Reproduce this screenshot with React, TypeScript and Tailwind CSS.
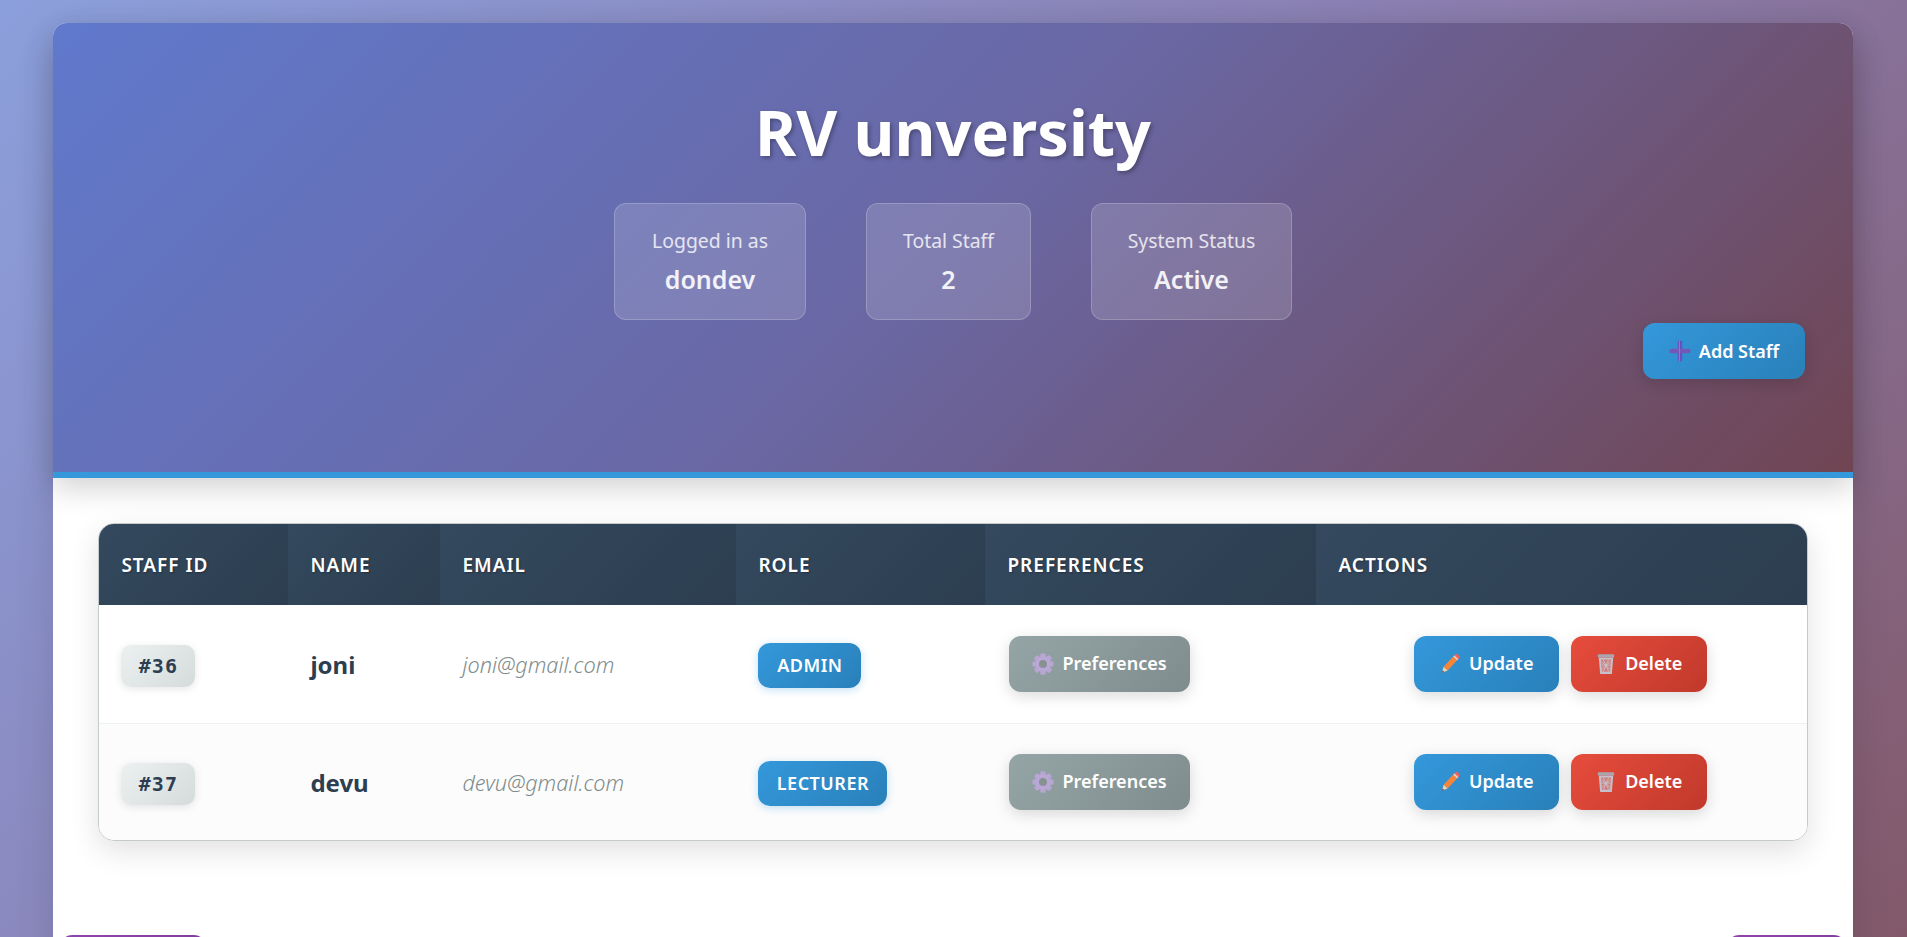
import type { ReactNode } from "react";

const font = { fontFamily: '"Noto Sans", sans-serif' };

function PlusIcon() {
  return (
    <svg viewBox="0 0 20 20" className="w-[22px] h-[22px] shrink-0">
      <rect x="8" y="0.5" width="4" height="19" rx="1.5" fill="#6a4fc0" />
      <rect x="0.5" y="8" width="19" height="4" rx="1.5" fill="#7458b8" />
      <rect x="9" y="0.5" width="1" height="19" fill="#8e78cc" />
    </svg>
  );
}

function GearIcon() {
  const teeth = [0, 45, 90, 135, 180, 225, 270, 315];
  return (
    <svg viewBox="0 0 20 20" className="w-[22px] h-[22px] shrink-0">
      {teeth.map((a) => (
        <rect key={a} x="7.6" y="0.3" width="4.8" height="5" rx="1.4" fill="#b7a6d3" transform={`rotate(${a} 10 10)`} />
      ))}
      <circle cx="10" cy="10" r="7" fill="#b9a8d6" />
      <circle cx="10" cy="10" r="3.6" fill="#87918f" />
      <path d="M6.6 11.2a3.6 3.6 0 0 0 6.6 .6a4.6 4.6 0 0 1-6.6-.6z" fill="#9c8fb8" />
    </svg>
  );
}

function PencilIcon() {
  return (
    <svg viewBox="0 0 20 20" className="w-[22px] h-[22px] shrink-0">
      <path d="M4.2 12.4 13.6 2.6l3.6 3.4-9.4 9.8z" fill="#f5853a" />
      <path d="M13.6 2.6l1.6-1.7a1 1 0 0 1 1.3 0l2.2 2.1a1 1 0 0 1 0 1.4L17.2 6z" fill="#f0625a" />
      <path d="M13 3.2l1-1 3.6 3.4-1 1z" fill="#e6d8dc" />
      <path d="M4.2 12.4 7.8 15.8 2.8 18z" fill="#f5cfa6" />
      <path d="M3.3 15.8 4.8 17.2 2.8 18z" fill="#4a3f6b" />
    </svg>
  );
}

function TrashIcon() {
  return (
    <svg viewBox="0 0 20 20" className="w-[22px] h-[22px] shrink-0">
      <path d="M3.4 4h13.2l-1.3 15H4.7z" fill="#c5c0cc" />
      <rect x="2.6" y="1.2" width="14.8" height="3" rx="0.8" fill="#a9a6b2" />
      <path d="M5.4 6h9.2l-.9 11H6.3z" fill="#cf7f7e" />
      <path d="M6 8l8 7M14 8l-8 7M7.5 6l5 11M12.5 6l-5 11M5.8 11h8.4" stroke="#c9c3cc" strokeWidth="0.8" fill="none" />
    </svg>
  );
}

function ActionButton({ icon, label, className }: { icon: ReactNode; label: string; className: string }) {
  return (
    <button
      className={`h-[56px] inline-flex items-center justify-center gap-[8px] rounded-[12px] text-white text-[18px] font-semibold shadow-[0_4px_15px_rgba(0,0,0,0.15)] ${className}`}
    >
      {icon}
      {label}
    </button>
  );
}

const staff = [
  { id: "#36", name: "joni", email: "joni@gmail.com", role: "ADMIN", roleWidth: "w-[103px]" },
  { id: "#37", name: "devu", email: "devu@gmail.com", role: "LECTURER", roleWidth: "w-[129px]" },
];

const stats = [
  { label: "Logged in as", value: "dondev", width: "w-[192px]" },
  { label: "Total Staff", value: "2", width: "w-[165px]" },
  { label: "System Status", value: "Active", width: "w-[201px]" },
];

const columns = ["STAFF ID", "NAME", "EMAIL", "ROLE", "PREFERENCES", "ACTIONS"];

export default function App() {
  return (
    <div
      style={font}
      className="h-screen overflow-hidden bg-[linear-gradient(135deg,#8b9fdc_0%,#8a7eb0_50%,#83596a_100%)] px-[53px] pt-[23px]"
    >
      <div className="w-[1800px] h-[1000px] bg-white rounded-t-[14px] shadow-[0_20px_40px_rgba(0,0,0,0.12)]">
        <header className="relative h-[455px] rounded-t-[14px] border-b-[6px] border-[#3498db] bg-[linear-gradient(135deg,#6079cc_0%,#6a67a3_50%,#704553_100%)] px-[48px] pt-[65px] shadow-[0_10px_30px_rgba(0,0,0,0.18)]">
          <h1 className="text-center text-[63px] leading-[88px] font-bold text-white [text-shadow:2px_2px_4px_rgba(0,0,0,0.3)]">
            RV unversity
          </h1>
          <div className="mt-[27px] flex justify-center gap-[60px]">
            {stats.map((s) => (
              <div
                key={s.label}
                className={`${s.width} h-[117px] rounded-[12px] border border-white/20 bg-white/15 text-center flex flex-col items-center justify-center`}
              >
                <div className="text-[19.4px] leading-[26px] text-white/80">{s.label}</div>
                <div className="mt-[9px] text-[25px] leading-[32px] font-semibold text-white/90">{s.value}</div>
              </div>
            ))}
          </div>
          <div className="mt-[3px] flex justify-end">
            <ActionButton
              icon={<PlusIcon />}
              label="Add Staff"
              className="w-[162px] bg-[linear-gradient(135deg,#3498db,#2980b9)]"
            />
          </div>
        </header>

        <div className="pl-[45px] pr-[45.5px] pt-[45px]">
          <div className="overflow-hidden rounded-[16px] border border-[#c5cacd] shadow-[0_10px_30px_rgba(0,0,0,0.12)]">
            <table className="w-full table-fixed border-collapse">
              <colgroup>
                <col className="w-[189px]" />
                <col className="w-[152px]" />
                <col className="w-[296px]" />
                <col className="w-[249px]" />
                <col className="w-[331px]" />
                <col />
              </colgroup>
              <thead>
                <tr>
                  {columns.map((c) => (
                    <th
                      key={c}
                      className="h-[81px] px-[22.4px] pt-[2px] text-left text-[19px] font-semibold tracking-[1px] text-white bg-[linear-gradient(135deg,#34495e,#2c3e50)] [text-shadow:1px_1px_2px_rgba(0,0,0,0.3)]"
                    >
                      {c}
                    </th>
                  ))}
                </tr>
              </thead>
              <tbody>
                {staff.map((p, i) => (
                  <tr key={p.id} className={i === 0 ? "bg-white border-b border-[#ecf0f1]" : "bg-[#fcfcfc]"}>
                    <td className={`${i === 0 ? "h-[118px]" : "h-[117px]"} px-[22.4px]`}>
                      <span className="mt-[5px] inline-flex w-[74px] h-[42px] items-center justify-center rounded-[10px] bg-[linear-gradient(135deg,#ecf0f1,#d5dbdb)] text-[20px] font-semibold tracking-[1px] text-[#2c3e50] shadow-[0_2px_8px_rgba(0,0,0,0.1)] font-['DejaVu_Sans_Mono',monospace]">
                        {p.id}
                      </span>
                    </td>
                    <td className="px-[22.4px] pt-[2px] text-[24px] font-bold text-[#2c3e50]">{p.name}</td>
                    <td className="px-[22.4px] pt-[3px] text-[21.7px] font-light italic text-[#7f8c8d]">{p.email}</td>
                    <td className="px-[22.4px]">
                      <span
                        className={`${p.roleWidth} mt-[3px] inline-flex h-[45px] items-center justify-center rounded-[12px] bg-[linear-gradient(135deg,#3498db,#2980b9)] text-[18px] font-semibold tracking-[0.5px] text-white shadow-[0_2px_8px_rgba(52,152,219,0.3)]`}
                      >
                        {p.role}
                      </span>
                    </td>
                    <td className="px-[24px]">
                      <ActionButton
                        icon={<GearIcon />}
                        label="Preferences"
                        className="w-[181px] bg-[linear-gradient(135deg,#95a5a6,#7f8c8d)]"
                      />
                    </td>
                    <td className="text-center">
                      <div className="flex justify-center gap-[12px] pr-[2px]">
                        <ActionButton
                          icon={<PencilIcon />}
                          label="Update"
                          className="w-[145px] bg-[linear-gradient(135deg,#3498db,#2980b9)]"
                        />
                        <ActionButton
                          icon={<TrashIcon />}
                          label="Delete"
                          className="w-[136px] bg-[linear-gradient(135deg,#e74c3c,#c0392b)]"
                        />
                      </div>
                    </td>
                  </tr>
                ))}
              </tbody>
            </table>
          </div>
        </div>

        <div className="mt-[94px] flex justify-between px-[7px]">
          <div className="h-[56px] w-[146px] rounded-[12px] bg-[linear-gradient(135deg,#8e44ad,#7d3c98)]" />
          <div className="h-[56px] w-[119px] rounded-[12px] bg-[linear-gradient(135deg,#8e44ad,#7d3c98)]" />
        </div>
      </div>
    </div>
  );
}
